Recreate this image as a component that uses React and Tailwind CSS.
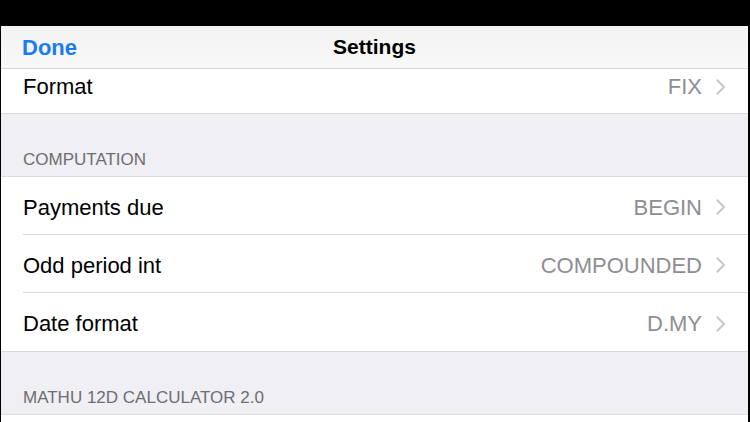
import React from "react";

const Chevron = () => (
  <svg width="10" height="16" viewBox="0 0 10 16" className="ml-[14px] shrink-0">
    <path d="M1.5 1.5 L8 8 L1.5 14.5" fill="none" stroke="#c7c7cc" strokeWidth="2" strokeLinecap="square" />
  </svg>
);

const Row = ({ label, value, divider, h = "h-[58px]", extra = "pt-[3px]" }) => (
  <div className={`flex items-stretch bg-white ${h}`}>
    <div className={`flex flex-1 items-center ml-[22px] pr-[22px] ${extra} ${divider ? "border-b border-[#d9d9dd]" : ""}`}>
      <span className="flex-1 text-[22px] text-black">{label}</span>
      <span className="text-[22px] text-[#8e8e93]">{value}</span>
      <Chevron />
    </div>
  </div>
);

const SectionHeader = ({ children }) => (
  <div className="flex h-[63px] items-end bg-[#efeff4] pl-[22px] pb-[8px] text-[17px] leading-none text-[#6d6d72] border-b border-[#dcdce0]">
    {children}
  </div>
);

export default function App() {
  return (
    <div
      className="flex h-[422px] w-[750px] flex-col overflow-hidden bg-black"
      style={{ fontFamily: '"Liberation Sans", Arial, sans-serif' }}
    >
      <div className="h-[26px] shrink-0 bg-black" />
      <div className="ml-[1px] mr-[2px] flex flex-1 flex-col overflow-hidden bg-[#efeff4]">
        <div className="relative flex h-[43px] shrink-0 items-center border-b border-[#d6d6da] bg-gradient-to-b from-[#f3f3f3] to-[#f8f8f8] pl-[21px]">
          <span className="text-[22px] font-bold text-[#1a7cf0]">Done</span>
          <span className="absolute left-1/2 -translate-x-1/2 text-[21px] font-bold text-black">Settings</span>
        </div>
        <div className="border-b border-[#d9d9dd]">
          <Row label="Format" value="FIX" h="h-[44px]" extra="pb-[9px]" />
        </div>
        <SectionHeader>COMPUTATION</SectionHeader>
        <div className="border-b border-[#d9d9dd]">
          <Row label="Payments due" value="BEGIN" divider />
          <Row label="Odd period int" value="COMPOUNDED" divider />
          <Row label="Date format" value="D.MY" />
        </div>
        <SectionHeader>MATHU 12D CALCULATOR 2.0</SectionHeader>
        <div className="flex-1 bg-white" />
      </div>
    </div>
  );
}
